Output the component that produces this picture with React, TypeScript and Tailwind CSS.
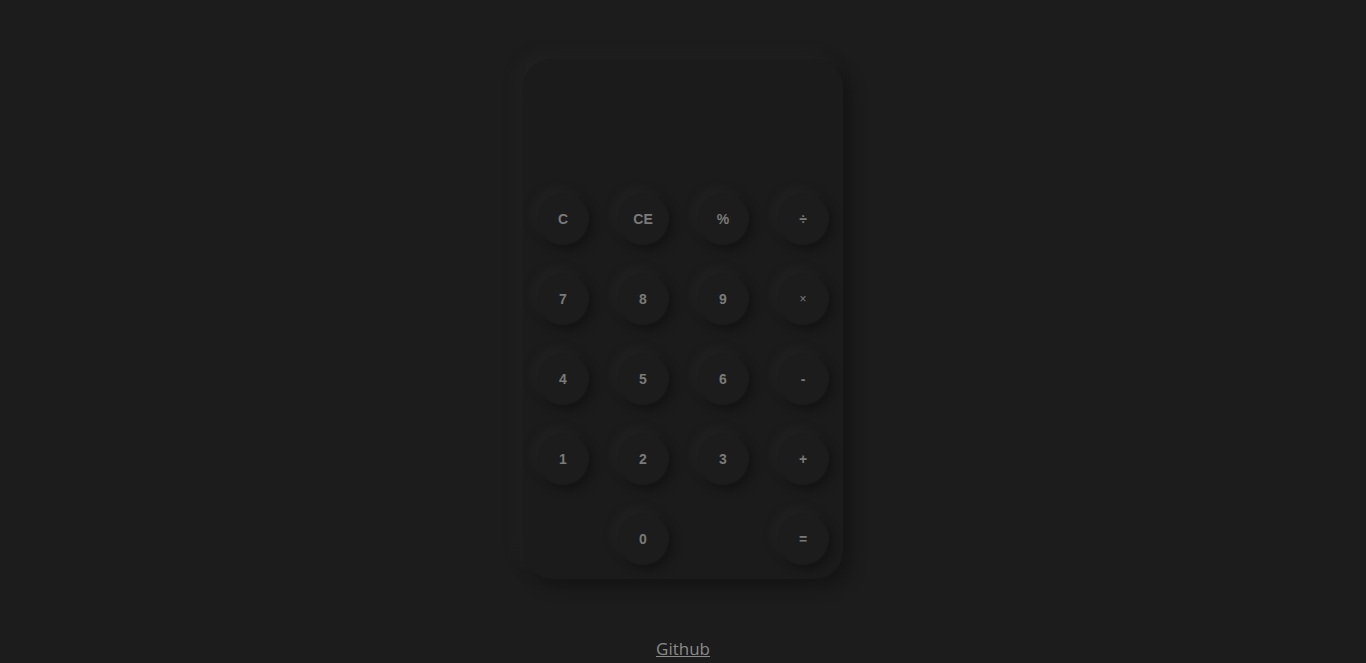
import React from "react";

const rows: string[][] = [
  ["C", "CE", "%", "÷"],
  ["7", "8", "9", "×"],
  ["4", "5", "6", "-"],
  ["1", "2", "3", "+"],
  ["", "0", "", "="],
];

export default function App() {
  return (
    <div
      className="min-h-[663px] w-full bg-[#1c1c1c] flex flex-col items-center pt-[59px]"
      style={{ fontFamily: "'Liberation Sans', Arial, sans-serif" }}
    >
      <div className="w-[320px] h-[520px] rounded-[28px] bg-[#1b1b1b] shadow-[8px_8px_14px_#151515,-6px_-6px_12px_#212121] flex flex-col">
        <div className="h-[121px]" />
        <div className="grid grid-cols-4">
          {rows.flat().map((k, i) => (
            <div key={i} className="h-[80px] flex items-center justify-center">
              {k !== "" && (
                <button
                  className={
                    k === "×"
                      ? "w-[52px] h-[52px] rounded-full bg-[#1c1c1c] shadow-[5px_5px_8px_#141414,-4px_-4px_8px_#222222] text-[#7a7a7a] text-[12px] font-normal flex items-center justify-center"
                      : "w-[52px] h-[52px] rounded-full bg-[#1c1c1c] shadow-[5px_5px_8px_#141414,-4px_-4px_8px_#222222] text-[#7a7a7a] text-[14px] font-bold flex items-center justify-center"
                  }
                >
                  {k}
                </button>
              )}
            </div>
          ))}
        </div>
      </div>
      <a
        href="#"
        className="mt-[57px] text-[#8a8a8a] text-[17px] underline"
        style={{ fontFamily: "'Open Sans', sans-serif" }}
      >
        Github
      </a>
    </div>
  );
}
